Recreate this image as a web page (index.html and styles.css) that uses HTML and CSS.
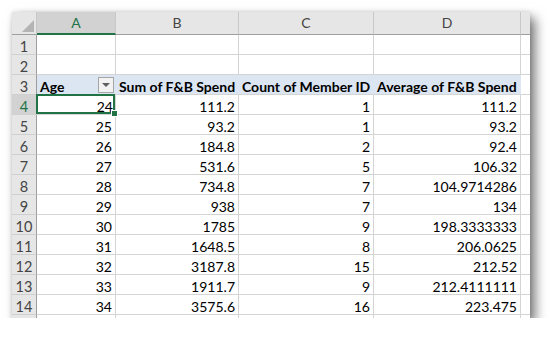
FILE: index.html
```html
<!DOCTYPE html>
<html lang="en">
<head>
    <meta charset="UTF-8">
    <title>Pivot Table - F&amp;B Spend by Age</title>
    <link rel="stylesheet" href="styles.css">
</head>
<body>
    <div class="window">
        <div class="sheet">
            <!-- column headers -->
            <div class="corner"><span class="corner-tri"></span></div>
            <div class="col-head active">A</div>
            <div class="col-head">B</div>
            <div class="col-head">C</div>
            <div class="col-head">D</div>
            <div class="col-head"></div>

            <div class="row-head">1</div>
            <div class="cell"></div><div class="cell"></div><div class="cell"></div><div class="cell"></div><div class="cell"></div>

            <div class="row-head">2</div>
            <div class="cell"></div><div class="cell"></div><div class="cell"></div><div class="cell"></div><div class="cell"></div>

            <div class="row-head">3</div>
            <div class="cell pivot-head">Age<span class="filter-btn"><span class="filter-arrow"></span></span></div>
            <div class="cell pivot-head">Sum of F&amp;B Spend</div>
            <div class="cell pivot-head">Count of Member ID</div>
            <div class="cell pivot-head">Average of F&amp;B Spend</div>
            <div class="cell"></div>

            <div class="row-head active">4</div>
            <div class="cell num selected">24<span class="fill-handle"></span></div><div class="cell num">111.2</div><div class="cell num">1</div><div class="cell num">111.2</div><div class="cell"></div>

            <div class="row-head">5</div>
            <div class="cell num">25</div><div class="cell num">93.2</div><div class="cell num">1</div><div class="cell num">93.2</div><div class="cell"></div>

            <div class="row-head">6</div>
            <div class="cell num">26</div><div class="cell num">184.8</div><div class="cell num">2</div><div class="cell num">92.4</div><div class="cell"></div>

            <div class="row-head">7</div>
            <div class="cell num">27</div><div class="cell num">531.6</div><div class="cell num">5</div><div class="cell num">106.32</div><div class="cell"></div>

            <div class="row-head">8</div>
            <div class="cell num">28</div><div class="cell num">734.8</div><div class="cell num">7</div><div class="cell num">104.9714286</div><div class="cell"></div>

            <div class="row-head">9</div>
            <div class="cell num">29</div><div class="cell num">938</div><div class="cell num">7</div><div class="cell num">134</div><div class="cell"></div>

            <div class="row-head">10</div>
            <div class="cell num">30</div><div class="cell num">1785</div><div class="cell num">9</div><div class="cell num">198.3333333</div><div class="cell"></div>

            <div class="row-head">11</div>
            <div class="cell num">31</div><div class="cell num">1648.5</div><div class="cell num">8</div><div class="cell num">206.0625</div><div class="cell"></div>

            <div class="row-head">12</div>
            <div class="cell num">32</div><div class="cell num">3187.8</div><div class="cell num">15</div><div class="cell num">212.52</div><div class="cell"></div>

            <div class="row-head">13</div>
            <div class="cell num">33</div><div class="cell num">1911.7</div><div class="cell num">9</div><div class="cell num">212.4111111</div><div class="cell"></div>

            <div class="row-head">14</div>
            <div class="cell num">34</div><div class="cell num">3575.6</div><div class="cell num">16</div><div class="cell num">223.475</div><div class="cell"></div>

            <!-- row 15 is cut off by the window edge -->
            <div class="row-head"></div>
            <div class="cell"></div><div class="cell"></div><div class="cell"></div><div class="cell"></div><div class="cell"></div>
        </div>
    </div>
</body>
</html>
```

FILE: styles.css
```css
body {
    margin: 0;
    background: #ffffff;
    font-family: Lato, 'Liberation Sans', sans-serif;
}
.window {
    margin: 12px 0 0 12px;
    width: 518px;
    height: 306px;
    overflow: hidden;
    background: #ffffff;
    box-shadow: 5px 6px 11px rgba(0, 0, 0, 0.55), 0 0 4px rgba(0, 0, 0, 0.12);
}
.sheet {
    display: grid;
    grid-template-columns: 25px 79px 123px 135px 147px 40px;
    grid-template-rows: 23px;
    grid-auto-rows: 20px;
    font-size: 14px;
    color: #000;
}
.sheet > div {
    box-sizing: border-box;
    border-right: 1px solid #d4d4d4;
    border-bottom: 1px solid #d4d4d4;
    white-space: nowrap;
    overflow: hidden;
}
.corner {
    background: #e6e6e6;
    display: flex;
    justify-content: flex-end;
    align-items: flex-end;
    padding: 0 2px 2px 0;
    border-right-color: #c8c8c8 !important;
    border-bottom-color: #9e9e9e !important;
}
.corner-tri {
    width: 0;
    height: 0;
    border-left: 12px solid transparent;
    border-bottom: 12px solid #b4b4b4;
}
.col-head {
    background: #e6e6e6;
    color: #444;
    text-align: center;
    line-height: 22px;
    border-right-color: #c8c8c8 !important;
    border-bottom-color: #9e9e9e !important;
}
.col-head.active {
    background: #d2d2d2;
    color: #217346;
    border-bottom: 2px solid #217346 !important;
    line-height: 21px;
}
.row-head {
    background: #e6e6e6;
    color: #444;
    text-align: center;
    font-size: 14.5px;
    line-height: 20px;
    padding-top: 2px;
    border-right-color: #9e9e9e !important;
    border-bottom-color: #cfcfcf !important;
}
.row-head.active {
    background: #d2d2d2;
    color: #217346;
}
.cell {
    line-height: 20px;
    padding: 2px 3px 0;
}
.num {
    text-align: right;
}
.pivot-head {
    background: #dce6f2;
    font-weight: bold;
    position: relative;
    border-right-color: #dce6f2 !important;
}
.filter-btn {
    position: absolute;
    right: 1px;
    top: 2px;
    width: 16px;
    height: 16px;
    box-sizing: border-box;
    border: 1px solid #a6a6a6;
    background: #f2f2f2;
    display: flex;
    justify-content: center;
    align-items: center;
}
.filter-arrow {
    width: 0;
    height: 0;
    border-left: 4px solid transparent;
    border-right: 4px solid transparent;
    border-top: 4px solid #606060;
}
.sheet > .selected {
    position: relative;
    overflow: visible;
    box-shadow: inset 0 0 0 2px #217346;
    margin: -1px 0 0 -1px;
    padding: 3px 2px 0 3px;
}
.fill-handle {
    position: absolute;
    right: -3px;
    bottom: -3px;
    width: 5px;
    height: 5px;
    background: #217346;
    border: 1px solid #fff;
}
```
